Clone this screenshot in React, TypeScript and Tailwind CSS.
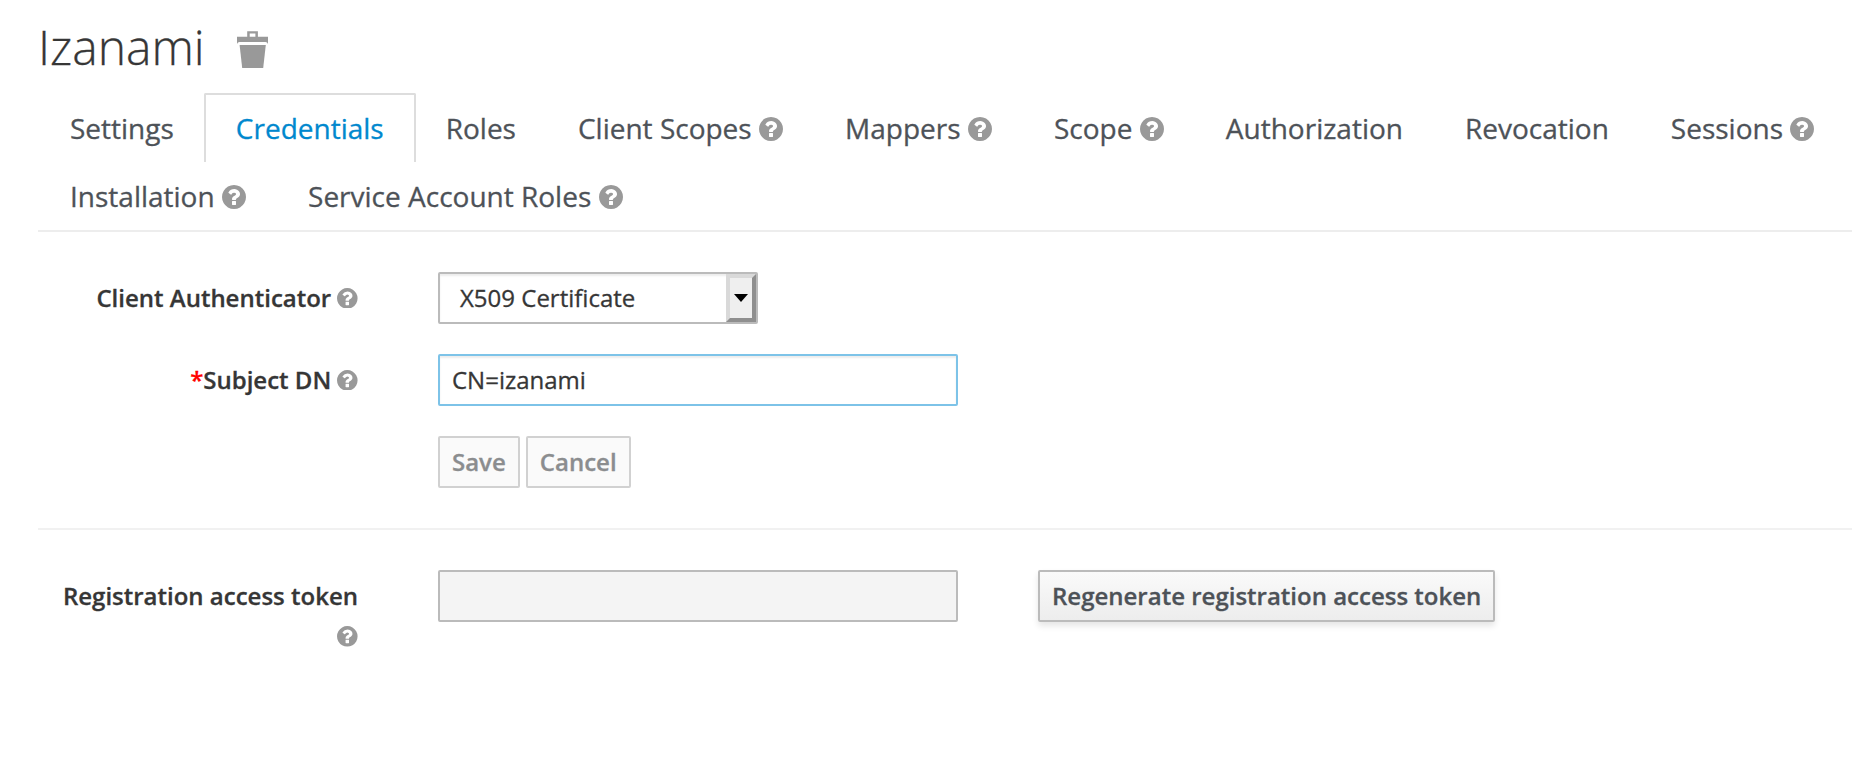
import React from "react";

const HELP_PATH =
  "M1024 1376v-192q0-14-9-23t-23-9h-192q-14 0-23 9t-9 23v192q0 14 9 23t23 9h192q14 0 23-9t9-23zm256-672q0-88-55.500-163t-138.500-116-170-41q-243 0-371 213-15 24 8 42l132 100q7 6 19 6 16 0 25-12 53-68 86-92 34-24 86-24 48 0 85.500 26t37.500 59q0 38-20 61t-68 45q-63 28-115.500 86.500t-52.500 125.500v36q0 14 9 23t23 9h192q14 0 23-9t9-23q0-19 21.500-49.500t54.500-49.500q32-18 49-28.500t46-35 44.500-48 28-60.500 12.500-81zm384 192q0 209-103 385.500t-279.500 279.500-385.500 103-385.500-103-279.500-279.500-103-385.500 103-385.500 279.500-279.500 385.500-103 385.500 103 279.500 279.500 103 385.500z";

function HelpIcon({ className }: { className: string }) {
  return (
    <svg viewBox="128 128 1536 1536" className={`shrink-0 fill-[#999999] ${className}`}>
      <path d={HELP_PATH} />
    </svg>
  );
}

function TrashIcon() {
  return (
    <svg viewBox="0 0 31 37" className="mt-[31px] h-[37px] w-[31px] fill-[#999999]">
      <path
        fillRule="evenodd"
        d="M10.200 0.300h10.700v5.500H31V13q-.6-2-2.500-2H2.500Q.6 11 0 13V5.800h10.200zM12.700 2.500v3.300h5.700V2.500z"
      />
      <path d="M2.600 14h26.200L26.200 37H5.200z" />
    </svg>
  );
}

type Tab = { label: string; help?: boolean; active?: boolean };

const TAB_ROWS: Tab[][] = [
  [
    { label: "Settings" },
    { label: "Credentials", active: true },
    { label: "Roles" },
    { label: "Client Scopes", help: true },
    { label: "Mappers", help: true },
    { label: "Scope", help: true },
    { label: "Authorization" },
    { label: "Revocation" },
    { label: "Sessions", help: true },
  ],
  [
    { label: "Installation", help: true },
    { label: "Service Account Roles", help: true },
  ],
];

function TabItem({ label, help, active }: Tab) {
  return (
    <li
      className={`-mr-[2px] flex h-[69px] items-center whitespace-nowrap rounded-t-[2px] border-2 border-b-0 px-[30px] pb-[1px] ${
        active ? "border-[#dddddd] text-[#0088ce]" : "border-transparent text-[#4d5258]"
      }`}
    >
      {label}
      {help && <HelpIcon className="ml-[7.4px] mt-[2px] size-6" />}
    </li>
  );
}

function Label({ text, required, help }: { text: string; required?: boolean; help?: boolean }) {
  return (
    <label className="flex w-[320px] shrink-0 items-center justify-end font-semibold">
      {required && <span className="text-[#ff0000]">*</span>}
      {text}
      {help && <HelpIcon className="ml-[6.2px] size-[20.6px]" />}
    </label>
  );
}

export default function App() {
  return (
    <div className="h-[784px] w-full overflow-hidden bg-white pl-[38px] font-['Open_Sans',sans-serif] text-[24px] leading-[34px] text-[#363636] [-webkit-text-stroke:0.3px]">
      <header className="flex h-[93px]">
        <h1 className="mt-5 text-[48px] font-light leading-[53px]">Izanami</h1>
        <button type="button" className="ml-8 flex items-start">
          <TrashIcon />
        </button>
      </header>

      <nav className="h-[139px] border-b-2 border-[#ededed] text-[28px]">
        {TAB_ROWS.map((row, i) => (
          <ul key={i} className="flex h-[68px]">
            {row.map((tab) => (
              <TabItem key={tab.label} {...tab} />
            ))}
          </ul>
        ))}
      </nav>

      <form className="flex flex-col gap-[30px] pt-10">
        <div className="flex h-[52px]">
          <Label text="Client Authenticator" help />
          <div className="ml-20 flex w-[320px] items-center justify-between rounded-[2px] border-2 border-[#bbbbbb] pl-[20px] shadow-[inset_0_2px_2px_rgba(3,3,3,0.075)]">
            X509 Certificate
            <span className="flex h-[48px] w-[30px] items-center justify-center border-4 border-b-[#8f8f8f] border-l-[#d9d9d9] border-r-[#8f8f8f] border-t-[#d9d9d9] bg-[#efefef]">
              <svg viewBox="0 0 14 8" className="-mt-px h-2 w-[14px] shrink-0">
                <path d="M0 0h14L7 8z" />
              </svg>
            </span>
          </div>
        </div>

        <div className="flex h-[52px]">
          <Label text="Subject DN" required help />
          <div className="ml-20 flex w-[520px] items-center rounded-[2px] border-2 border-[#7dc3e8] pl-3 shadow-[inset_0_2px_2px_rgba(3,3,3,0.075)]">
            CN=izanami
          </div>
        </div>

        <div className="ml-[400px] flex h-[52px] gap-[6px] font-semibold text-[#8b8d8f]">
          <button type="button" className="rounded-[2px] border-2 border-[#d1d1d1] bg-[#fafafa] px-3">
            Save
          </button>
          <button type="button" className="rounded-[2px] border-2 border-[#d1d1d1] bg-[#fafafa] px-3">
            Cancel
          </button>
        </div>
      </form>

      <section className="mt-10 flex border-t-2 border-[#f1f1f1] pt-10">
        <div className="flex w-[320px] flex-col items-end pt-[9px]">
          <Label text="Registration access token" />
          <HelpIcon className="mt-[13px] size-[20.6px]" />
        </div>
        <div className="ml-20 h-[52px] w-[520px] rounded-[2px] border-2 border-[#bbbbbb] bg-[#f4f4f4]" />
        <button
          type="button"
          className="ml-20 h-[52px] rounded-[2px] border-2 border-[#bbbbbb] bg-linear-to-b from-[#fafafa] to-[#ededed] px-3 font-semibold text-[#4d5258] shadow-[0_4px_6px_rgba(3,3,3,0.1)]"
        >
          Regenerate registration access token
        </button>
      </section>
    </div>
  );
}
